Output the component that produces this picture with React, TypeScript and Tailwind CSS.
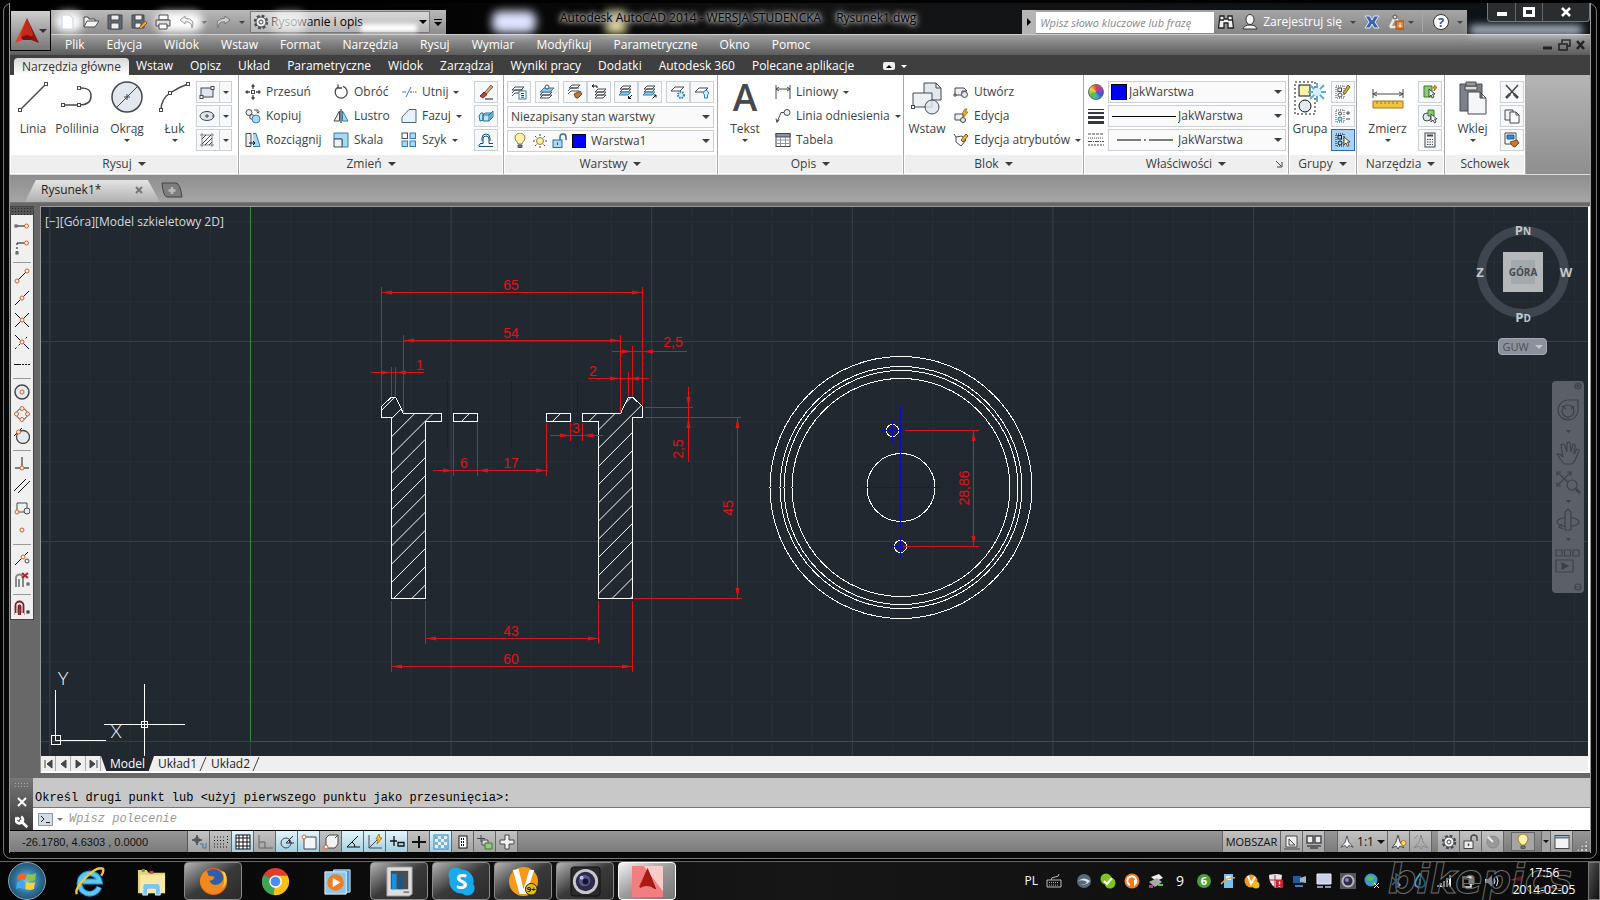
import type { ReactNode } from "react";

const INK = "#45484d";
const BLUE = "#2f7fb5";
const SKY = "#a9d8f2";

// 16x16 line icons, stroked with INK unless they say otherwise
const icons: Record<string, ReactNode> = {
  rect: <><rect x="2" y="4" width="12" height="9" fill="#dfe5ec" /><rect x="1" y="11.5" width="3" height="3" fill="#fff" /><rect x="12" y="2.5" width="3" height="3" fill="#fff" /></>,
  ellipse: <><ellipse cx="8" cy="8" rx="7" ry="4.5" fill="#dfe5ec" /><path d="M8 6v4M6 8h4M14 6.5v3M6.5 3.5h3" /></>,
  hatch: <><path d="M3 1v14M13 1v14M1 3h14M1 13h14" stroke="#888" /><path d="M3 7l4-4M3 12l9-9M6 13l7-7M10 13l3-3" /></>,
  move: <><path d="M8 1v4M8 11v4M1 8h4M11 8h4M6.5 2.5L8 1l1.5 1.5M6.5 13.5L8 15l1.5-1.5M2.5 6.5L1 8l1.5 1.5M13.5 6.5L15 8l-1.5 1.5" strokeWidth="1.4" /><rect x="6.5" y="6.5" width="3" height="3" fill="#fff" /></>,
  copy: <><circle cx="4" cy="4.5" r="3" fill="#eef1f4" /><circle cx="7" cy="9" r="2.3" fill="#eef1f4" /><circle cx="11" cy="11" r="4" fill={SKY} stroke={BLUE} /><path d="M9 2h4v3M11.5 3.5L13 5.3l1.5-1.8" /></>,
  stretch: <><path d="M1 1.5h5v13H1z" fill="#eef1f4" /><path d="M8 1.5h3l4 13H8" fill={SKY} stroke={BLUE} /><path d="M4 11h6M8 9l2 2-2 2" stroke="#111" /></>,
  rotate: <path d="M5 3a6 6 0 1 0 5-.6M5 .5V4h4" strokeWidth="1.3" />,
  mirror: <><path d="M6.5 3v10H1z" fill="#eef1f4" /><path d="M9.5 3v10H15z" fill={SKY} stroke={BLUE} /><path d="M8 1v14" stroke="#111" /></>,
  scale: <><path d="M1 1h14v14H9V7H1z" fill={SKY} stroke={BLUE} /><path d="M1 7h8v8H1z" fill="#eef1f4" /></>,
  trim: <><path d="M1 8h4M5 13l5-10" stroke={BLUE} /><path d="M9 8h2M12 8h1M14 8h1.5" /></>,
  chamfer: <path d="M1 14.5V9l7-7.5h7v13z" fill="#e7f3fb" stroke="#4b6478" />,
  array: <><rect x="1" y="1" width="5.5" height="5.5" fill="#fff" /><g fill={SKY} stroke={BLUE}><rect x="9" y="1" width="5.5" height="5.5" /><rect x="1" y="9" width="5.5" height="5.5" /><rect x="9" y="9" width="5.5" height="5.5" /></g></>,
  erase: <><path d="M6.5 8.5L13 1l2 2-6.5 7z" fill="#caa98b" stroke="#8b6543" /><path d="M2 12l4-4 3 2.5-4 3.5z" fill="#b44832" stroke="#7c2e1e" /><path d="M7 15h8" stroke="#111" /></>,
  explode: <g stroke="#19719f" fill="#bfe4f6"><path d="M1 8l2-3 2 0v7l-3 1zM5 7h6v6H5zM5 7l2-2h6l-2 2M11 7l2-2v6l-2 2M13 5l2-2v6l-2 2" /></g>,
  offset: <><path d="M1 14.5h14M2 11.5h3V7a3 3 0 0 1 6 0v4.5h4M4 9V6a4 4 0 0 1 8 0v3" stroke="#174f7a" /><path d="M1 14.5q-1-2 2-3" stroke="#19719f" /></>,
  layerProps: <><g fill="#fff"><path d="M1 12l3-3h8M1 9l3-3h8M1 6l3-3h9L10 6z" /></g><rect x="8" y="7" width="7" height="8" fill="#fff" stroke={BLUE} /><path d="M10 9.5h3M10 11.5h3M10 13.2h3" /></>,
  layerMake: <><path d="M1 14l3-3h9l-3 3zM1 11l3-3h9l-3 3z" fill="#fff" /><path d="M1 8l4-4h10l-4 4z" fill="#8cc9e8" stroke={BLUE} /><circle cx="8" cy="3" r="2" fill="#fff" /></>,
  layerMatch: <><path d="M1 10l3-3h8M1 7l3-3h8M2 4l3-3h8l-3 3z" fill="#fff" /><path d="M7 10l6-3 2 3-4 4q-3 1-4-4z" fill="#b9783a" stroke="#7a4817" /></>,
  layerPrev: <><path d="M4 14l3-3h8l-3 3zM4 11l3-3h8l-3 3zM4 8l3-3h8l-3 3z" fill="#fff" /><path d="M6 4V2H1M3 .5L1 2l2 1.5" stroke="#111" /></>,
  layerIso: <><path d="M2 5l3-3h8l-3 3zM2 8l3-3h8l-3 3z" fill="#fff" /><path d="M1 11l3-3h9l-3 3z" fill="#8cc9e8" stroke={BLUE} /><path d="M14 11l-3.5 3.5M10.5 12v2.5H13" stroke="#111" /></>,
  layerUniso: <><path d="M2 5l3-3h8l-3 3zM2 8l3-3h8l-3 3z" fill="#fff" /><path d="M1 11l3-3h9l-3 3z" fill="#8cc9e8" stroke={BLUE} /><path d="M10.5 14.5L14 11M11.5 11H14v2.5" stroke="#111" /></>,
  layerFreeze: <><path d="M1 7l4-4h9l-4 4z" fill="#fff" /><circle cx="11" cy="11" r="3" stroke={BLUE} fill="#d8eefa" strokeDasharray="1.5 1" strokeWidth="2" /></>,
  layerOff: <><path d="M1 8l4-4h9l-4 4z" fill="#fff" /><path d="M10.5 14v-3a2.5 2.5 0 1 1 3 0v3z" fill="#d8eefa" stroke={BLUE} /></>,
  bulb: <><path d="M6 11c0-2-3-3-3-6a5 5 0 0 1 10 0c0 3-3 4-3 6z" fill="#fff0a8" stroke="#9c7b2c" /><path d="M6 12h4v2.5H6z" fill="#777" stroke="#555" /></>,
  sun: <><circle cx="8" cy="8" r="3.5" fill="#fff0a8" stroke="#9c7b2c" /><path d="M8 1v2M8 13v2M1 8h2M13 8h2M3 3l1.5 1.5M11.5 11.5L13 13M3 13l1.5-1.5M11.5 4.5L13 3" /></>,
  unlock: <><rect x="1" y="7" width="9" height="7.5" fill="#a9d8f2" stroke="#2d6f93" /><path d="M8 7V4a3 3 0 0 1 6 0v3" stroke="#2d6f93" strokeWidth="1.5" /><path d="M5.5 9.5v2.5" /></>,
  linear: <path d="M1 1v14M15 1v14M1 5h14M4 3L1 5l3 2M12 3l3 2-3 2" />,
  leader: <><circle cx="12" cy="4.5" r="3" fill="#eef1f4" /><path d="M9 4.5H6L2 14M1 10.5l1 4 2.5-3" /></>,
  table: <><rect x="1" y="1.5" width="14" height="13" fill="#fff" /><path d="M1 1.5h14V5H1z" fill="#8b95a3" /><path d="M1 8h14M1 11.5h14M5.5 5v9.5M10.5 5v9.5" stroke="#8b95a3" /></>,
  blockNew: <><path d="M2 4h9l3 3H9v4H2z" fill="#eef1f4" /><circle cx="11.5" cy="10.5" r="3" fill="#dfe5ec" /><path d="M1 10h2v2H1z" fill="#fff" /></>,
  blockEdit: <><path d="M2 6h8v6H2z" fill="#eef1f4" /><circle cx="10" cy="12" r="2.5" fill="#dfe5ec" /><path d="M12 1l-3 5h2l-1 4 5-6h-3l2-3z" fill="#f5b93a" stroke="#b36f10" /></>,
  attrEdit: <><path d="M3 5l6-1 4 4-5 6-5-4z" fill="#fff" /><path d="M8 8l5-6 2 2-5 6z" fill="#f5b93a" stroke="#7a4817" /><path d="M1 2l2 3" /></>,
  lineWeight: <g stroke="none" fill="#35383d"><rect y="1" width="16" height="1" /><rect y="4" width="16" height="2" /><rect y="8" width="16" height="3" /><rect y="13" width="16" height="3" /></g>,
  lineType: <g><path d="M0 2h16" strokeDasharray="3 1" /><path d="M0 6h16" strokeDasharray="1 1" /><path d="M0 9.5h16" strokeDasharray="4 1 1 1" /><path d="M0 13h16" strokeDasharray="2 1" /></g>,
  groupEdit: <><path d="M1 2h8v12H1z" strokeDasharray="1 1" /><rect x="3" y="4" width="3.5" height="3.5" /><circle cx="5" cy="11" r="2" /><path d="M8 9l5-8 2 2-5 7z" fill="#c9b14a" stroke="#7a5d17" /></>,
  groupAdd: <><path d="M1 2h8v12H1z" strokeDasharray="1 1" /><circle cx="5" cy="5.5" r="1.5" /><circle cx="5" cy="11" r="2" fill={SKY} stroke={BLUE} /><path d="M11 5h4M13 3v4M11 11h4" /></>,
  groupSel: <><path d="M1 2h8v12H1z" strokeDasharray="1 1" stroke="#111" /><rect x="3" y="3.5" width="3.5" height="3.5" stroke="#111" /><circle cx="5" cy="11" r="2" stroke="#111" /><path d="M9 5v8l2-2 1.5 3.5 1.5-1L12.5 10H15z" fill="#fffbd0" /></>,
  quickSel: <><path d="M2 2h8v11H2z" fill="#8ecb78" stroke="#3b7a2a" /><path d="M7 5v8l2-2 1.5 3 1.5-1-1.5-3H13z" fill="#fff" /><path d="M13 1l-2 3h2l-1 3 3-4h-2z" fill="#f5b93a" stroke="#b36f10" /></>,
  selSimilar: <><circle cx="5" cy="9" r="4" fill="#dfe5ec" /><path d="M6 2h6v6H6z" fill="#8ecb78" stroke="#3b7a2a" /><path d="M9 6v8l2-2 1.5 3 1.5-1-1.5-3H15z" fill="#fff" /></>,
  calc: <><rect x="3" y="1" width="10" height="14" fill="#f4f4f4" /><path d="M5 3.5h6" strokeWidth="2" /><path d="M5 7.5h6M5 10h6M5 12.5h6" strokeDasharray="1.5 1" /></>,
  cut: <><path d="M2 1l9 10M14 1L5 11" strokeWidth="1.5" /><path d="M2 14l4-4M14 14l-4-4" strokeWidth="2.5" /></>,
  pages: <><path d="M1 2h8v10H1z" fill="#eef1f4" /><path d="M6 4h6l3 3v8H6zM12 4v3h3" fill="#fff" /></>,
  matchProp: <><path d="M1 1h11v11H1z" fill="#fff" /><path d="M3 3h7v4H3z" fill="#3f86c8" stroke="#1d5b94" /><path d="M6 10l7-2 2 3-4 4q-3 0-5-5z" fill="#c67a3a" stroke="#7a4817" /></>,
  // object snap palette
  sTrack: <><path d="M3 8h8" stroke="#111" /><rect x="1" y="7" width="2" height="2" /><circle cx="12.5" cy="8" r="2" stroke="#d4622a" /></>,
  sFrom: <><path d="M3 3h7" stroke="#111" /><path d="M3 3v9" strokeDasharray="2 2" stroke="#111" /><rect x="2" y="12" width="2" height="2" /><circle cx="12.5" cy="3" r="2" stroke="#d4622a" /></>,
  sEnd: <><path d="M4 12l8-8" stroke="#111" /><circle cx="3" cy="13" r="2" stroke="#d4622a" /><circle cx="13" cy="3" r="2" stroke="#d4622a" /></>,
  sMid: <><path d="M1 15L15 1" stroke="#111" /><circle cx="8" cy="8" r="2" fill="#f0f0f0" stroke="#d4622a" /></>,
  sInt: <><path d="M1 15L15 1M1 1l14 14" stroke="#111" /><circle cx="8" cy="8" r="2" fill="#f0f0f0" stroke="#d4622a" /></>,
  sApp: <><path d="M1 1l14 14" stroke="#111" /><path d="M1 15L15 1" stroke="#111" strokeDasharray="2 3" /><circle cx="8" cy="8" r="2" fill="#f0f0f0" stroke="#d4622a" /></>,
  sExt: <><path d="M0 8.5h7" stroke="#111" /><path d="M8 8.5h8" strokeDasharray="2 1" stroke="#111" /></>,
  sCen: <><circle cx="8" cy="8" r="7" fill="#e4eaee" strokeWidth="1.5" /><circle cx="8" cy="8" r="2" stroke="#d4622a" /></>,
  sQuad: <><circle cx="8" cy="8" r="5.5" /><g fill="#f0f0f0" stroke="#d4622a"><circle cx="8" cy="2.5" r="2" /><circle cx="8" cy="13.5" r="2" /><circle cx="2.5" cy="8" r="2" /><circle cx="13.5" cy="8" r="2" /></g></>,
  sTan: <><circle cx="9" cy="9" r="6.5" fill="#e4eaee" strokeWidth="1.3" /><path d="M0 8l8-8" stroke="#111" /><circle cx="4.5" cy="4" r="2" fill="#f0f0f0" stroke="#d4622a" /></>,
  sPerp: <><path d="M8 1v9M1 12h14" stroke="#111" /><circle cx="8" cy="12" r="2" fill="#f0f0f0" stroke="#d4622a" /></>,
  sPar: <path d="M0 13L12 1M4 15L16 3" stroke="#111" />,
  sIns: <><path d="M3 10V3h10v5M5 12h5" /><circle cx="3" cy="12" r="2" stroke="#d4622a" /><circle cx="13" cy="11" r="3" fill="#e4eaee" /></>,
  sNode: <circle cx="8" cy="8" r="2" stroke="#d4622a" />,
  sNear: <><path d="M1 15L14 2" stroke="#111" /><circle cx="9" cy="7" r="2" fill="#f0f0f0" stroke="#d4622a" /><circle cx="13" cy="11" r="2" /></>,
  sNone: <><path d="M2 15V6a3.5 3.5 0 0 1 7 0v9M5 15V7" stroke="#8a8a8a" strokeWidth="2" /><path d="M8 1l6 5M14 1L8 6" stroke="#b3202a" strokeWidth="2" /><rect x="13" y="11" width="2" height="2" /></>,
  sOpts: <><path d="M1.500 15V5.500a4 4 0 0 1 8 0V15M4.500 15V6.500a1 1 0 0 1 2 0V15" stroke="#7c2026" strokeWidth="1.800" /><path d="M1 14h3M7 14h3" stroke="#eee" strokeWidth="2" /><rect x="13" y="11" width="2" height="2" stroke="#111" /></>,
  // status bar
  tInfer: <><path d="M6 1v10M1 6h10" strokeWidth="1.5" /><circle cx="6" cy="6" r="2.5" /><path d="M9 10h3v4h3V9" stroke={BLUE} /></>,
  tSnap: <path d="M1 3h11M1 6.5h11M1 10h11M1 13h14M14.500 2v8" strokeDasharray="1 2" stroke="#111" />,
  tGrid: <><rect x="1" y="1" width="14" height="14" fill="#fff" stroke="#111" /><path d="M4 1v14M8 1v14M12 1v14M1 4h14M1 8h14M1 12h14" stroke="#111" /></>,
  tOrtho: <path d="M2 1v13h14M2 8h6v6" stroke="#666" />,
  tPolar: <><circle cx="7" cy="9" r="5" /><path d="M7 9l7-7M7 9h8M10.500 5.500v3.500" stroke="#234" /></>,
  tOsnap: <><path d="M3 3h12v12H3z" fill="#f0f6fa" /><circle cx="3" cy="3" r="2" fill="#fff" stroke="#d4622a" /></>,
  t3d: <><path d="M3 4l3-3h9v9l-3 4H3z" fill="#f3f3f3" /><path d="M12 4l3-3" /><circle cx="3" cy="13" r="2" fill="#fff" stroke="#d4622a" /></>,
  tAngle: <path d="M13 2L2 13h13M7 8q3 2 3 5" stroke="#111" />,
  tDucs: <><path d="M2 1v13h13M2 14L10 6" /><path d="M12 0L9 5h2l-1 5 5-6h-2z" fill="#f5c93a" stroke="#b37f10" /></>,
  tDyn: <path d="M5 2v10M1 7h7M9 8.5h6v3.5H9z" stroke="#111" strokeWidth="1.3" />,
  tLwt: <path d="M8 2v12M1 8h14" stroke="#111" strokeWidth="2" />,
  tTpy: <><rect x="1" y="1" width="14" height="14" fill="#e3f1fa" stroke={BLUE} /><path d="M2 3.500h12M2 9.500h12" stroke="#78b4d8" strokeDasharray="3 3" strokeWidth="3" /><path d="M5 6.500h9M5 12.500h9" stroke="#78b4d8" strokeDasharray="3 3" strokeWidth="3" /></>,
  tQp: <><rect x="4" y="2" width="8" height="12" fill="#fff" stroke="#111" /><path d="M6 5h4M6 8h4M6 11h4" stroke="#111" strokeDasharray="1 1" strokeWidth="2" /></>,
  tSc: <><path d="M4 1v7M0 4.5h8" /><path d="M5 6h6v5H5z" fill="#ddd" /><path d="M8 9h7v6H8z" fill="#8ecb78" stroke="#3b7a2a" /></>,
  tPlus: <path d="M6 1h4v5h5v4h-5v5H6v-5H1V6h5z" fill="#f3f3f3" />,
  model: <><path d="M2 2h11v11H2zM0 15h16" fill="#eee" /><path d="M5 5v6h6z" /></>,
  viewports: <path d="M1 2h6v7H1zM9 2h6v7H9zM1 12h14M4 14h8" fill="#eee" strokeWidth="1.5" />,
  anno: <path d="M8 1l2 7 5 6-5-2-2 3-2-3-5 2 5-6z" fill="#f3f3f3" />,
  annoSun: <><path d="M7 1l2 7 4 6-4-2-2 3-2-3-4 2 4-6z" fill="#f3f3f3" /><circle cx="12.5" cy="9" r="2.5" fill="#ffd867" stroke="#b37f10" /></>,
  annoOff: <path d="M8 1l2 7 5 6-5-2-2 3-2-3-5 2 5-6zM1 5l4-4" stroke="#888" />,
  gear: <><circle cx="8" cy="8" r="6" strokeWidth="2.5" strokeDasharray="2.7 2" /><circle cx="8" cy="8" r="5" fill="#f3f3f3" /><circle cx="8" cy="8" r="2" /></>,
  lockOpen: <><rect x="1" y="7" width="9" height="7.5" fill="#eee" /><path d="M8 7V4a3 3 0 0 1 6 0v3M5.5 9.5v2.5" strokeWidth="1.5" /></>,
  hardware: <><circle cx="8" cy="8" r="6" fill="#999" stroke="#888" /><path d="M3 3l5 5" stroke="#eee" strokeWidth="2" /></>,
  clean: <><rect x="1" y="1.5" width="14" height="13" fill="#f3f3f3" /><path d="M1 3.5h14" stroke="#5d7894" strokeWidth="2" /></>,
  // quick access
  fileNew: <path d="M3 1h7l4 3v11H3z" fill="#fff" stroke="#c3d2ea" />,
  open: <><path d="M1 13V3h4l1 2h6v2" fill="#eee" /><path d="M1 13l3-6h12l-4 6z" fill="#f4f4f4" /></>,
  save: <><path d="M1 1h14v14H1z" fill="#606872" /><path d="M4 1h8v5H4z" fill="#eee" /><path d="M4 9h8v6H4z" fill="#eee" /></>,
  saveAs: <><path d="M1 1h12v13H1z" fill="#606872" /><path d="M4 1h7v5H4zM4 9h6v5H4z" fill="#eee" /><path d="M8 14l6-7 2 2-6 6z" fill="#f0a83a" stroke="#8a5a10" /></>,
  print: <><path d="M4 1h9v5H4z" fill="#fff" /><path d="M1 6h14v6H1z" fill="#ddd" /><path d="M4 10h8v5H4z" fill="#fff" /></>,
  undo: <path d="M6 2L1 6l5 4V8q7-1 7 6 4-9-7-10z" fill="#f3f3f3" stroke="#999" />,
  redo: <path d="M10 2l5 4-5 4V8Q3 7 3 14-1 5 10 4z" fill="#ccc" stroke="#777" />,
  binoc: <path d="M2 2h4v3h4V2h4l1.5 12H10V9H6v5H.5zM2 6h4M10 6h4" fill="#eee" stroke="#222" strokeWidth="1.3" />,
  user: <><ellipse cx="8" cy="5.5" rx="4" ry="5" fill="#f3f3f3" stroke="#333" /><path d="M1 15q1-4 7-4t7 4z" fill="#f3f3f3" stroke="#333" /></>,
  exchange: <path d="M1 2h5l2 4 2-4h5l-4 6 4 6h-5l-2-4-2 4H1l4-6z" fill="#3d66a8" stroke="#dfe8f5" />,
  connect: <><path d="M2 13L7 3l5 8M2 13h6" strokeWidth="2.5" stroke="#e8e8e8" /><circle cx="7" cy="3" r="2" fill="#ddd" /><rect x="8" y="7" width="8" height="8" fill="#e8822c" stroke="#9a4a10" /><path d="M12 9v4M10.5 11.5L12 13l1.5-1.5" stroke="#fff" /></>,
};

function Icon({ name, className = "size-4" }: { name: string; className?: string }) {
  return (
    <svg viewBox="0 0 16 16" fill="none" stroke={INK} strokeWidth="1" aria-hidden className={`shrink-0 ${className}`}>
      {icons[name]}
    </svg>
  );
}

function Caret({ big = false, className = "" }: { big?: boolean; className?: string }) {
  return (
    <svg viewBox="0 0 8 4" aria-hidden className={`shrink-0 fill-current ${big ? "h-1 w-2" : "h-[3px] w-[6px]"} ${className}`}>
      <path d="M0 0h8L4 4z" />
    </svg>
  );
}

function Panel({ title, width, menu = true, corner = false, children }: { title: string; width: string; menu?: boolean; corner?: boolean; children: ReactNode }) {
  return (
    <section className={`flex shrink-0 flex-col border-r border-[#a9a9a9] bg-white ${width}`}>
      <div className="flex h-20 pt-[5px]">{children}</div>
      <div className="relative mx-px flex h-[18px] items-center justify-center gap-1.5 bg-[#efefef] text-[#3c3c3c]">
        {title}
        {menu && <Caret big />}
        {corner && (
          <svg viewBox="0 0 8 8" fill="none" stroke="#444" aria-hidden className="absolute right-1 size-2">
            <path d="M1 1l5 5M7 2v5H2" />
          </svg>
        )}
      </div>
    </section>
  );
}

function Big({ label, width, menu = false, children }: { label: string; width: string; menu?: boolean; children: ReactNode }) {
  return (
    <button className={`flex shrink-0 flex-col items-center ${width}`}>
      <svg viewBox="0 0 32 36" fill="none" stroke={INK} aria-hidden className="h-9 w-8 shrink-0 overflow-visible">{children}</svg>
      <span className="mt-1 h-[17px] leading-[17px]">{label}</span>
      {menu && <Caret className="mt-0.5" />}
    </button>
  );
}

function Cmd({ icon, label, menu = false }: { icon: string; label: string; menu?: boolean }) {
  return (
    <button className="flex h-6 items-center gap-[5px] whitespace-nowrap">
      <Icon name={icon} />
      {label}
      {menu && <Caret />}
    </button>
  );
}

function Small({ icon, on = false, split = false }: { icon: string; on?: boolean; split?: boolean }) {
  return (
    <button
      aria-label={icon}
      className={`my-px flex h-[22px] items-center justify-around border ${split ? "w-9" : "w-6"} ${on ? "border-[#2c6fad] bg-[#a8d3f7]" : "border-[#cbd0d6] bg-[#f7f8f9]"}`}
    >
      <Icon name={icon} />
      {split && <span className="flex h-full items-center border-l border-[#cbd0d6] pl-[3px]"><Caret /></span>}
    </button>
  );
}

function Pick({ label, value, children }: { label: string; value: string; children?: ReactNode }) {
  return (
    <div className="my-0.5 flex h-[22px] items-center border border-[#cbd0d6] bg-[#fafafa] pr-[3px] first:mt-px">
      {children}
      <select aria-label={label} className="h-full min-w-0 flex-1 appearance-none bg-transparent outline-none">
        <option>{value}</option>
      </select>
      <Caret big />
    </div>
  );
}

const node = (x: number, y: number) => <rect x={x - 1.5} y={y - 1.5} width="3" height="3" fill="#fff" />;

function Ribbon() {
  return (
    <div className="flex h-[99px] bg-linear-to-b from-[#b5b5b5] to-[#8e8e8e] text-[#3c3f44]">
      <Panel title="Rysuj" width="w-[229px]">
        <Big label="Linia" width="w-[46px]"><path d="M3 30L29 4" strokeWidth="1.5" />{node(3, 30)}{node(29, 4)}</Big>
        <Big label="Polilinia" width="w-[42px]"><path d="M2 25h16q12 0 12-9T18 8" strokeWidth="1.5" />{node(2, 25)}{node(18, 25)}{node(18, 8)}</Big>
        <Big label="Okrąg" width="w-[58px]" menu><circle cx="16" cy="17" r="15" fill="#e3e8ee" strokeWidth="1.5" /><path d="M5 28L27 6M13 17h6M16 14v6" /></Big>
        <Big label="Łuk" width="w-[37px]" menu><path d="M2 30Q2 19 11 13T29 4" strokeWidth="1.5" />{node(2, 30)}{node(11, 13)}{node(29, 4)}</Big>
        <div className="ml-[3px] flex flex-col"><Small icon="rect" split /><Small icon="ellipse" split /><Small icon="hatch" split /></div>
      </Panel>
      <Panel title="Zmień" width="w-[265px]">
        <div className="w-[88px] pl-1.5"><Cmd icon="move" label="Przesuń" /><Cmd icon="copy" label="Kopiuj" /><Cmd icon="stretch" label="Rozciągnij" /></div>
        <div className="w-[68px] pl-1.5"><Cmd icon="rotate" label="Obróć" /><Cmd icon="mirror" label="Lustro" /><Cmd icon="scale" label="Skala" /></div>
        <div className="w-[79px] pl-1.5"><Cmd icon="trim" label="Utnij" menu /><Cmd icon="chamfer" label="Fazuj" menu /><Cmd icon="array" label="Szyk" menu /></div>
        <div className="flex flex-col"><Small icon="erase" /><Small icon="explode" /><Small icon="offset" /></div>
      </Panel>
      <Panel title="Warstwy" width="w-[214px]">
        <div className="flex-1 pr-[3px] pl-[3px]">
          <div className="flex justify-between">
            <Small icon="layerProps" /><Small icon="layerMake" />
            <div className="flex"><Small icon="layerMatch" /><Small icon="layerPrev" /></div>
            <div className="flex"><Small icon="layerIso" /><Small icon="layerUniso" /></div>
            <div className="flex"><Small icon="layerFreeze" /><Small icon="layerOff" /></div>
          </div>
          <Pick label="Stan warstwy" value="Niezapisany stan warstwy"><span className="w-[3px]" /></Pick>
          <Pick label="Warstwa" value="Warstwa1">
            <span className="mr-[5px] ml-1 flex items-center gap-1"><Icon name="bulb" /><Icon name="sun" /><Icon name="unlock" /><span className="size-3.5 border border-black bg-[#0000f5]" /></span>
          </Pick>
        </div>
      </Panel>
      <Panel title="Opis" width="w-[186px]">
        <Big label="Tekst" width="w-[54px]" menu><text x="16" y="31" textAnchor="middle" fontSize="37" stroke="none" fill={INK} fontWeight="600" fontFamily="Open Sans, sans-serif">A</text></Big>
        <div className="pl-[3px]"><Cmd icon="linear" label="Liniowy" menu /><Cmd icon="leader" label="Linia odniesienia" menu /><Cmd icon="table" label="Tabela" /></div>
      </Panel>
      <Panel title="Blok" width="w-[180px]">
        <Big label="Wstaw" width="w-[46px]">
          <path d="M13 3h12l5 5v12H13z" fill="#e3e8ee" /><path d="M25 3v5h5" /><path d="M2 13h19v14H2z" fill="#eef1f4" /><circle cx="21" cy="27" r="7" fill="#dfe5ec" fillOpacity=".8" />{node(2, 27)}
        </Big>
        <div className="pl-[3px]"><Cmd icon="blockNew" label="Utwórz" /><Cmd icon="blockEdit" label="Edycja" /><Cmd icon="attrEdit" label="Edycja atrybutów" menu /></div>
      </Panel>
      <Panel title="Właściwości" width="w-[205px]" corner>
        <div className="flex w-6 flex-col items-center">
          <span className="my-1 size-4 rounded-full border border-[#666] bg-[conic-gradient(#e8403a,#b03ac0,#3a5ad8,#3ac0b0,#5ac03a,#f0d83a,#e8403a)]" />
          <Icon name="lineWeight" className="my-1 size-4" /><Icon name="lineType" className="my-1 size-4" />
        </div>
        <div className="flex-1 pr-0.5">
          <Pick label="Kolor" value="JakWarstwa"><span className="mr-0.5 ml-0.5 size-4 border border-black bg-[#0000f5]" /></Pick>
          <Pick label="Szerokość linii" value="JakWarstwa"><span className="mr-0.5 ml-[3px] h-px w-16 bg-black" /></Pick>
          <Pick label="Rodzaj linii" value="JakWarstwa">
            <svg viewBox="0 0 59 2" aria-hidden className="mr-0.5 ml-2 h-0.5 w-[59px]"><path d="M0 1h59" stroke="#000" strokeDasharray="24 3 2 3" /></svg>
          </Pick>
        </div>
      </Panel>
      <Panel title="Grupy" width="w-[68px]">
        <Big label="Grupa" width="w-[42px]">
          <path d="M1 2h20v32H1z" strokeDasharray="2 2" stroke="#111" /><rect x="5" y="5" width="11" height="11" fill="#f7f3a8" stroke="#111" /><circle cx="11" cy="26" r="6" fill="#e3e8ee" stroke="#111" />
          <path d="M23 3v19M14 12h18M16 5l14 14M30 5L16 19" stroke="#5aaee0" strokeWidth="2" /><circle cx="23" cy="12" r="4" fill="#d8f0fc" stroke="none" />
        </Big>
        <div className="flex flex-col"><Small icon="groupEdit" /><Small icon="groupAdd" /><Small icon="groupSel" on /></div>
      </Panel>
      <Panel title="Narzędzia" width="w-[88px]">
        <Big label="Zmierz" width="w-[61px]" menu><path d="M1 9v9M31 9v9M1 14h30M5 12l-4 2 4 2M27 12l4 2-4 2" /><path d="M1 21h30v7H1z" fill="#f2c33c" stroke="#a5761a" /><path d="M5 21v3M9 21v3M13 21v3M17 21v3M21 21v3M25 21v3" stroke="#a5761a" /></Big>
        <div className="flex flex-col"><Small icon="quickSel" /><Small icon="selSimilar" /><Small icon="calc" /></div>
      </Panel>
      <Panel title="Schowek" width="w-[81px]" menu={false}>
        <Big label="Wklej" width="w-[55px]" menu><path d="M3 4h22v27H3z" fill="#7d828a" /><path d="M8 6h12v4H8z" fill="#ddd" /><path d="M9 2h10v4H9z" fill="#999" /><path d="M11 12h12l6 6v16H11zM23 12v6h6" fill="#f4f6f8" /></Big>
        <div className="flex flex-col"><Small icon="cut" /><Small icon="pages" /><Small icon="matchProp" /></div>
      </Panel>
    </div>
  );
}

const menus = ["Plik", "Edycja", "Widok", "Wstaw", "Format", "Narzędzia", "Rysuj", "Wymiar", "Modyfikuj", "Parametryczne", "Okno", "Pomoc"];
const tabs = ["Wstaw", "Opisz", "Układ", "Parametryczne", "Widok", "Zarządzaj", "Wyniki pracy", "Dodatki", "Autodesk 360", "Polecane aplikacje"];

function TitleBar() {
  return (
    <header className="relative flex h-[31px] items-end bg-linear-to-r from-black via-[#141414] to-[#0c1218]">
      <div className="absolute top-2 left-[482px] h-[22px] w-11 rounded-lg bg-[#dfe4ff] blur-[5px]" />
      <div className="absolute top-2 left-[596px] h-[22px] w-5 bg-[#e9e2a8] blur-[4px]" />
      <div className="absolute right-2 bottom-0 h-2 w-28 bg-[#cfdceb] blur-[4px]" />
      <div className="ml-[41px] flex h-6 items-center bg-linear-to-b from-[#b9b9b9] to-[#8d8d8d] pl-2 text-[#444]">
        <div className="relative flex items-center gap-2">
          <span className="absolute -left-1 h-5 w-7 rounded-full bg-white blur-[4px]" />
          <span className="absolute left-24 h-5 w-12 rounded-full bg-white blur-[4px]" />
          {["fileNew", "open", "save", "saveAs", "print", "undo"].map((n) => (
            <button key={n} aria-label={n} className="relative"><Icon name={n} /></button>
          ))}
          <Caret className="-ml-0.5" />
          <button aria-label="redo"><Icon name="redo" /></button>
          <Caret />
        </div>
        <div className="relative ml-[5px] flex h-[22px] w-[180px] items-center border border-[#777] bg-linear-to-b from-[#d8d8d8] to-[#b5b5b5] px-0.5 text-black">
          <Icon name="gear" />
          <select aria-label="Obszar roboczy" className="h-full min-w-0 flex-1 appearance-none bg-transparent pl-0.5">
            <option>Rysowanie i opis</option>
          </select>
          <Caret big />
          <span className="pointer-events-none absolute top-0 left-5 h-5 w-9 rounded-full bg-white/70 blur-[4px]" />
          <span className="pointer-events-none absolute right-3 bottom-0 h-2 w-14 bg-white blur-[2px]" />
        </div>
        <button aria-label="Dostosuj" className="flex h-full w-4 flex-col items-center justify-center gap-0.5 text-black">
          <span className="h-px w-2 bg-black" /><Caret big />
        </button>
      </div>
      <h1 className="relative ml-[114px] flex h-6 items-center gap-[15px] pb-2 text-black [text-shadow:0_0_3px_#a5a5a5,0_0_4px_#a5a5a5,0_0_6px_#999,0_0_8px_#888,0_0_10px_#777]">
        <span>Autodesk AutoCAD 2014 - WERSJA STUDENCKA</span><span>Rysunek1.dwg</span>
      </h1>
      <div className="mr-[123px] ml-auto flex h-6 items-center bg-linear-to-b from-[#a5a5a5] to-[#858585] text-white">
        <button aria-label="Rozwiń" className="flex h-full w-3.5 items-center justify-center bg-[#b5b5b5] text-black"><Caret big className="-rotate-90" /></button>
        <input aria-label="Szukaj" placeholder="Wpisz słowo kluczowe lub frazę" className="h-[21px] w-[178px] bg-white px-1 text-[11px] text-black italic outline-none placeholder:text-[#888]" />
        <button aria-label="Szukaj teraz" className="ml-1"><Icon name="binoc" /></button>
        <button className="ml-2 flex items-center gap-[5px]"><Icon name="user" />Zarejestruj się</button>
        <Caret className="mr-2 ml-2 text-[#444]" />
        <button aria-label="Exchange"><Icon name="exchange" /></button>
        <button aria-label="Połącz" className="ml-2 flex items-center gap-1 text-[#444]"><Icon name="connect" /><Caret /></button>
        <span className="ml-2 h-5 w-px bg-[#aaa]" />
        <button aria-label="Pomoc" className="ml-2.5 flex items-center gap-2 text-[#444]">
          <span className="flex size-4 items-center justify-center rounded-full border border-[#333] bg-white text-[13px] leading-none font-bold text-[#2b5fa8]">?</span><Caret />
        </button>
        <span className="w-1" />
      </div>
      <div className="absolute top-0 right-0 flex h-[19px] w-[103px] items-center rounded-b border border-t-0 border-[#777] bg-[#2a2d30]">
        <button aria-label="Minimalizuj" className="flex h-full w-[28px] items-center justify-center border-r border-[#666]"><span className="mt-1 h-1 w-2.5 bg-white" /></button>
        <button aria-label="Przywróć" className="flex h-full w-[27px] items-center justify-center border-r border-[#666]"><span className="h-2.5 w-3 border-[3px] border-white" /></button>
        <button aria-label="Zamknij" className="flex h-full flex-1 items-center justify-center">
          <svg viewBox="0 0 10 10" stroke="#fff" strokeWidth="2.5" aria-hidden className="size-2.5"><path d="M1 1l8 8M9 1L1 9" /></svg>
        </button>
      </div>
    </header>
  );
}

function AppButton() {
  return (
    <button aria-label="AutoCAD" className="absolute top-[7px] left-0 z-10 flex h-[41px] w-[41px] items-center border border-black bg-linear-to-b from-[#cfcfcf] to-[#777] pl-1 text-[#333]">
      <svg viewBox="0 0 24 26" aria-hidden className="h-[26px] w-6 shrink-0">
        <path d="M12 0L0 25l8-3z" fill="#e0412c" /><path d="M12 0l12 25-8-3z" fill="#8f1711" /><path d="M12 0L6 16l2 6 4-3 4 3 2-6z" fill="#c42a1c" /><path d="M6 19l6-2 6 2-2 3H8z" fill="#7a0f0b" />
      </svg>
      <Caret big />
    </button>
  );
}

const RED = "#e01217";

// Dimension arrowhead with its tip on (x, y)
function Arrow({ x, y, dir }: { x: number; y: number; dir: "l" | "r" | "u" | "d" }) {
  const turn = { l: 0, u: 90, r: 180, d: 270 }[dir];
  return <path d="M0 0l10-2v4z" fill={RED} stroke="none" transform={`translate(${x} ${y}) rotate(${turn})`} />;
}

function DimText({ x, y, up = false, children }: { x: number; y: number; up?: boolean; children: ReactNode }) {
  return (
    <text transform={`translate(${x} ${y})${up ? " rotate(-90)" : ""}`} textAnchor="middle" fill={RED} stroke="none" fontSize="14" fontFamily="Liberation Sans, Arial, sans-serif">
      {children}
    </text>
  );
}

const leftWall = "M381.5 417.5V406.5L391.5 397H395.5L403.5 413.5H441.5V421.5H425.5V598.5H391.5V417.5z";
const rightWall = "M642.5 417.5V406.5L632.5 397H628.5L620.5 413.5H582.5V421.5H598.5V598.5H632.5V417.5z";
const webs = "M453.5 413.5h24v8h-24zM546.5 413.5h24v8h-24z";

function Drawing() {
  const hatch = Array.from({ length: 34 }, (_, k) => 755.5 + k * 18.2);
  return (
    <svg aria-hidden className="absolute inset-0 size-full" fill="none">
      <defs>
        <clipPath id="solid"><path d={leftWall + rightWall + webs} /></clipPath>
        <pattern id="minor" x="250" y="741" width="40.12" height="40" patternUnits="userSpaceOnUse"><path d="M.5 0v40M0 .5h40.12" stroke="#262e36" /></pattern>
        <pattern id="major" x="250" y="741" width="200.6" height="200" patternUnits="userSpaceOnUse"><path d="M.5 0v200M0 .5h200.6" stroke="#363e47" /></pattern>
      </defs>
      <g transform="translate(-41 -207)">
        <rect x="40" y="207" width="4000" height="3000" fill="url(#minor)" />
        <rect x="40" y="207" width="4000" height="3000" fill="url(#major)" />
        <g shapeRendering="crispEdges">
          <path d="M250.5 207V741" stroke="#2f8a3a" />
          <path d="M250 741.5H4000" stroke="#80303a" />
        </g>

        {/* section view */}
        <g stroke="#fff" clipPath="url(#solid)">{hatch.map((c) => <path key={c} d={`M380 ${c - 380}L650 ${c - 650}`} />)}</g>
        <g stroke="#fff" shapeRendering="crispEdges"><path d={leftWall} /><path d={rightWall} /><path d={webs} /></g>

        {/* top view */}
        <g stroke="#fff" shapeRendering="crispEdges">
          {[131, 121, 117, 109, 34].map((r) => <circle key={r} cx="901" cy="487.5" r={r} />)}
          <circle cx="892.5" cy="430.5" r="6" /><circle cx="900.5" cy="546.5" r="6" />
        </g>
        <path d="M447.5 381v67M511.5 381v67M577.5 381v67M900.5 406v121M862 487.5h79M892.5 419v25M882 430.5h21M900.5 535v23M891 546.5h20" stroke="#0a0ac8" shapeRendering="crispEdges" />

        <g stroke={RED} shapeRendering="crispEdges">
          <path d="M381.5 292.5H642.5M381.5 287V405M642.5 287V405" />
          <path d="M403.5 340.5H620.5M403.5 335V413M620.5 335V413" />
          <path d="M371 372.5H424M391.5 367V396M395.5 367V396" />
          <path d="M612 351.5H687M632.5 346V396M588 378.5H649M628.5 372V396" />
          <path d="M688.5 387V462M645 407.5H693M645 417.5H741M737.5 417V598M634 598.5H742" />
          <path d="M550 435.5H603M570.5 423V441M582.5 423V441" />
          <path d="M433 470.5H546M453.5 423V476M477.5 423V476M546.5 423V476" />
          <path d="M425.5 638.5H598.5M425.5 601V644M598.5 601V644M391.5 666.5H632.5M391.5 601V672M632.5 601V672" />
          <path d="M905 430.5H979M903 546.5H979M973.5 430V546" />
        </g>
        <Arrow x={382} y={292.5} dir="l" /><Arrow x={642} y={292.5} dir="r" />
        <Arrow x={404} y={340.5} dir="l" /><Arrow x={620} y={340.5} dir="r" />
        <Arrow x={391} y={372.5} dir="r" /><Arrow x={396} y={372.5} dir="l" />
        <Arrow x={632} y={351.5} dir="r" /><Arrow x={643} y={351.5} dir="l" />
        <Arrow x={620} y={378.5} dir="r" /><Arrow x={629} y={378.5} dir="l" />
        <Arrow x={688.5} y={407} dir="d" /><Arrow x={688.5} y={418} dir="u" />
        <Arrow x={737.5} y={418} dir="u" /><Arrow x={737.5} y={598} dir="d" />
        <Arrow x={570} y={435.5} dir="r" /><Arrow x={583} y={435.5} dir="l" />
        <Arrow x={453} y={470.5} dir="r" /><Arrow x={478} y={470.5} dir="l" /><Arrow x={546} y={470.5} dir="r" />
        <Arrow x={426} y={638.5} dir="l" /><Arrow x={598} y={638.5} dir="r" />
        <Arrow x={392} y={666.5} dir="l" /><Arrow x={632} y={666.5} dir="r" />
        <Arrow x={973.5} y={431} dir="u" /><Arrow x={973.5} y={546} dir="d" />
        <DimText x={511} y={290}>65</DimText>
        <DimText x={511} y={338}>54</DimText>
        <DimText x={420} y={370}>1</DimText>
        <DimText x={673} y={347}>2,5</DimText>
        <DimText x={593} y={376}>2</DimText>
        <DimText x={576} y={433}>3</DimText>
        <DimText x={464} y={468}>6</DimText>
        <DimText x={511} y={468}>17</DimText>
        <DimText x={511} y={636}>43</DimText>
        <DimText x={511} y={664}>60</DimText>
        <DimText x={683} y={449} up>2,5</DimText>
        <DimText x={733} y={508} up>45</DimText>
        <DimText x={969} y={488} up>28,86</DimText>

        {/* UCS mark and crosshair */}
        <g stroke="#fff" shapeRendering="crispEdges">
          <path d="M55.5 690V740.5H106M51.5 735.5h9v9h-9z" />
          <path d="M104 724.5H185M144.5 684V756M141.5 721.5h6v6h-6z" />
        </g>
        <g fill="#fff" fontSize="18" textAnchor="middle" fontFamily="Lato, sans-serif" fontWeight="300"><text x="63" y="685">Y</text><text x="116" y="738">X</text></g>
      </g>
    </svg>
  );
}

function NavTools() {
  return (
    <>
      <div className="absolute top-[17px] right-[17px]">
        <svg viewBox="0 0 96 96" fill="none" aria-hidden className="size-24 overflow-visible" fontFamily="Open Sans, sans-serif" fontWeight="700" textAnchor="middle">
          <circle cx="48" cy="48" r="41.5" stroke="#40464f" strokeWidth="9" />
          <rect x="28" y="28" width="40" height="40" fill="#b5b7b8" /><rect x="36" y="36" width="24" height="24" fill="#a4a9ad" />
          <text x="48" y="52" fontSize="10" fill="#454c54">GÓRA</text>
          <g fontSize="13" fill="#c4c7ca"><text x="48" y="11">P<tspan fontSize="10">N</tspan></text><text x="48" y="98">P<tspan fontSize="10">D</tspan></text><text x="5" y="53">Z</text><text x="91" y="53">W</text></g>
        </svg>
      </div>
      <button className="absolute top-[131px] right-[41px] flex h-[17px] w-[49px] items-center justify-center gap-1.5 rounded border border-[#a5a9b5] bg-[#8d919e] text-[11px] text-[#4a4e58]">
        GUW<Caret big className="text-[#c5c8d0]" />
      </button>
      <div className="absolute top-[174px] right-1 rounded bg-[#5a6066] text-[#3c4249]">
        <svg viewBox="0 0 32 212" fill="none" stroke="currentColor" strokeWidth="1.2" aria-hidden className="h-[212px] w-8">
          <circle cx="26" cy="5" r="3" /><circle cx="26" cy="206" r="3" /><path d="M24.5 3.5l3 3M27.5 3.5l-3 3M24.5 206h3" />
          <path d="M16 19h10v11a10 10 0 1 1-10-11z" /><circle cx="16" cy="30" r="6" /><path d="M10 25l4 3M22 25l-3 3M16 36v4" />
          <path d="M12 83q-4-5-7-10 3-1 6 3l-2-12q3-2 4 1l2 6V62q2-2 3 0l1 9 2-8q3 0 2 3l-1 7 3-5q2 0 2 2l-4 9q-2 4-4 4z" />
          <path d="M5 91l15 14M19 91L5 105M5 95v-4h4M15 91h4v4M5 101v4h4" /><circle cx="20" cy="104" r="5" fill="#5a6066" /><path d="M24 108l4 4" strokeWidth="2.5" />
          <ellipse cx="16" cy="141" rx="11" ry="4.5" /><path d="M13 149v-18l3-3 3 3v18z" fill="#5a6066" /><path d="M10 143l-3 3 4 2" />
          <path d="M4 169h6v6H4zM12.5 169h6v6h-6zM21 169h6v6h-6zM4 179h17v12H4z" /><path d="M10 182l6 3-6 3z" fill="currentColor" />
          <path d="M14 49h5l-2.5 3zM14 119h5l-2.5 3zM14 157h5l-2.5 3z" fill="currentColor" stroke="none" />
        </svg>
      </div>
    </>
  );
}

const snaps = [["sTrack", "sFrom"], ["sEnd", "sMid", "sInt", "sApp", "sExt"], ["sCen", "sQuad", "sTan"], ["sPerp", "sPar", "sIns", "sNode"], ["sNear", "sNone"], ["sOpts"]];

function Workspace() {
  return (
    <main className="flex min-h-[400px] flex-1 bg-[#686868] pt-[3px]">
      <aside className="mr-1.5 w-6 self-start border border-[#444] bg-[#f0f0f0]">
        <div className="h-2 bg-[#555] bg-[radial-gradient(#222_1px,transparent_1px)] bg-[size:3px_3px]" />
        {snaps.map((group, i) => (
          <div key={i} className={i ? "mx-0.5 mt-[3px] border-t border-[#999] pt-0.5" : ""}>
            {group.map((n) => (
              <button key={n} aria-label={n} className="flex h-[22px] w-full items-center justify-center"><Icon name={n} /></button>
            ))}
          </div>
        ))}
      </aside>
      <div className="flex min-w-0 flex-1 flex-col border-t border-r-2 border-l border-t-[#999] border-r-white border-l-[#999]">
        <div className="relative flex-1 overflow-hidden bg-[#212830]">
          <Drawing />
          <p className="absolute top-[7px] left-1 font-medium text-[#d5d8db]">[−][Góra][Model szkieletowy 2D]</p>
          <NavTools />
        </div>
        <nav className="flex h-[17px] items-center border-b-2 border-white bg-[#efefef] text-[#222]">
          {["M4 3v8M11 3v8L6 7z", "M10 3v8L5 7z", "M5 3v8l5-4z", "M4 3v8l5-4zM11 3v8"].map((d) => (
            <button key={d} aria-label="Przewiń" className="h-full w-[15px] border-r border-[#aaa]">
              <svg viewBox="0 0 15 14" fill="#444" stroke="#444" aria-hidden className="h-3.5 w-[15px]"><path d={d} /></svg>
            </button>
          ))}
          <a href="#model" className="flex h-full w-[53px] items-center justify-center bg-[#212830] text-white [clip-path:polygon(0_0,100%_0,90%_100%,10%_100%)]">Model</a>
          {["Układ1", "Układ2"].map((t) => (
            <a key={t} href="#uklad" className="flex h-full w-[53px] items-center justify-end gap-0.5">
              {t}
              <svg viewBox="0 0 8 14" stroke="#444" aria-hidden className="h-3.5 w-2"><path d="M1 14L7 0" /></svg>
            </a>
          ))}
        </nav>
      </div>
    </main>
  );
}

function CommandLine() {
  return (
    <section className="mt-[5px] flex h-[52px] text-black">
      <div className="flex w-[23px] flex-col items-center justify-between bg-linear-to-b from-[#777] to-[#3c3c3c] pt-1 pb-px text-white">
        <span className="h-1.5 w-4 bg-[radial-gradient(#aaa_1px,transparent_1px)] bg-[size:3px_3px]" />
        <svg viewBox="0 0 10 10" stroke="#fff" strokeWidth="2" aria-hidden className="size-2.5"><path d="M1 1l8 8M9 1L1 9" /></svg>
        <svg viewBox="0 0 16 16" stroke="#fff" strokeWidth="3" fill="none" aria-hidden className="size-3.5"><path d="M6 6l8 8M2 3a4 4 0 1 0 5-1M2 3l3 2" /></svg>
      </div>
      <div className="flex min-w-0 flex-1 flex-col">
        <p className="flex flex-1 items-center border-b border-[#777] bg-[#c8c8c8] pt-2.5 pl-0.5 font-['Liberation_Mono',monospace]">
          Określ drugi punkt lub &lt;użyj pierwszego punktu jako przesunięcia&gt;:
        </p>
        <label className="flex h-[22px] items-center bg-white pl-[5px] text-[#777]">
          <svg viewBox="0 0 15 13" fill="#d5dbe2" stroke="#8a97a5" aria-hidden className="h-[13px] w-[15px]"><path d="M.5 .5h14v12H.5z" /><path d="M3 3l3 3-3 3M8 9.5h4" stroke="#222" fill="none" /></svg>
          <Caret className="mr-1.5 ml-1" />
          <input aria-label="Polecenie" placeholder="Wpisz polecenie" className="flex-1 font-['Liberation_Mono',monospace] italic outline-none placeholder:text-[#9a9a9a]" />
        </label>
      </div>
    </section>
  );
}

const toggles: [string, boolean][] = [
  ["tInfer", false], ["tSnap", false], ["tGrid", true], ["tOrtho", false], ["tPolar", true], ["tOsnap", true], ["t3d", false], ["tAngle", true],
  ["tDucs", true], ["tDyn", true], ["tLwt", false], ["tTpy", true], ["tQp", false], ["tSc", false], ["tPlus", false],
];

function StatusBtn({ icon, on = false }: { icon: string; on?: boolean }) {
  return (
    <button aria-label={icon} className={`flex h-full w-[22px] shrink-0 items-center justify-center border-r border-[#666] ${on ? "bg-linear-to-b from-[#e3f5fc] to-[#a3cfe0]" : "bg-linear-to-b from-[#c3c3c3] to-[#a2a2a2]"}`}>
      <Icon name={icon} />
    </button>
  );
}

function StatusBar() {
  return (
    <footer className="flex h-[23px] border-y border-black bg-linear-to-b from-[#979797] to-[#7b7b7b] text-[#111]">
      <span className="flex w-[178px] items-center border-r border-[#555] pl-3 font-['Liberation_Sans',Arial,sans-serif] text-[11px]">-26.1780, 4.6303 , 0.0000</span>
      {toggles.map(([n, on]) => <StatusBtn key={n} icon={n} on={on} />)}
      <button className="ml-auto flex w-[59px] items-center justify-center border-x border-[#666] bg-linear-to-b from-[#c3c3c3] to-[#a2a2a2] text-[11px]">MOBSZAR</button>
      <StatusBtn icon="model" /><StatusBtn icon="viewports" />
      <button className="ml-3 flex w-[51px] items-center justify-center gap-[3px] border-x border-[#666] bg-linear-to-b from-[#c3c3c3] to-[#a2a2a2]"><Icon name="anno" className="size-3.5" />1:1<Caret big /></button>
      <StatusBtn icon="annoSun" /><StatusBtn icon="annoOff" />
      <span className="w-[6px]" />
      <StatusBtn icon="gear" /><StatusBtn icon="lockOpen" /><StatusBtn icon="hardware" />
      <span className="flex w-[37px] items-center justify-center"><span className="flex h-[19px] w-6 items-center justify-center border border-[#666] bg-[#a5a5a5]"><Icon name="bulb" /></span></span>
      <span className="flex w-2.5 items-center justify-center border-x border-[#666] bg-[#a5a5a5]"><Caret /></span>
      <StatusBtn icon="clean" />
      <span className="mr-0.5 ml-[3px] size-3 self-end bg-[radial-gradient(#ccc_1px,transparent_1px)] bg-[size:4px_4px] [clip-path:polygon(100%_0,100%_100%,0_100%)]" />
    </footer>
  );
}

// 32x32 taskbar artwork
const apps: { name: string; open?: boolean; active?: boolean; art: ReactNode }[] = [
  { name: "Internet Explorer", art: <><path d="M26 22a10.500 10.500 0 1 1 .5-6H9" fill="none" stroke="#1f8fd6" strokeWidth="6" /><path d="M26 22a10.500 10.500 0 1 1 .5-6H9" fill="none" stroke="#5cc8f5" strokeWidth="4" /><path d="M3 29Q0 24 12 12T30 3q1 3-2 7" fill="none" stroke="#f4c63a" strokeWidth="2.5" /></> },
  { name: "Eksplorator", art: <><path d="M2 4h9l2 3h17v21H2z" fill="#e9cf76" /><path d="M4 9h26v19H4z" fill="#f7e8a4" /><path d="M6 3h3v3H6z" fill="#4a9a4a" /><path d="M14 5h4v3h-4z" fill="#c44" /><path d="M7 30v-9q0-3 3-3h12q3 0 3 3v9h-5v-6h-8v6z" fill="#7fc4ea" stroke="#dff2fb" /></> },
  { name: "Firefox", open: true, art: <><circle cx="16" cy="16" r="14" fill="#e8661b" /><circle cx="16" cy="13" r="10" fill="#2f5fa8" /><path d="M2 15Q4 6 9 5l2 5 6 1q-1 4-5 4 2 6 9 4 8-3 5-14 6 6 3 15a14 14 0 0 1-27-5z" fill="#f08a1e" /><path d="M28 7q4 10-3 16 5-9-1-18z" fill="#f9cf4a" /></> },
  { name: "Chrome", art: <><circle cx="16" cy="16" r="14" fill="#e33b2e" /><path d="M16 16L4 9a14 14 0 0 0 10 21z" fill="#3aa757" /><path d="M16 16l-2 14A14 14 0 0 0 28.5 10H16z" fill="#fbc116" /><circle cx="16" cy="16" r="6.5" fill="#fff" /><circle cx="16" cy="16" r="5" fill="#4c8bf5" /></> },
  { name: "Media Player", art: <><path d="M12 4h17v23H12z" fill="#4b9bd0" stroke="#cde6f5" /><path d="M3 6h22v23H3z" fill="#8fc5e6" stroke="#e5f3fb" /><circle cx="14" cy="17" r="8.5" fill="#ef7d21" /><path d="M11 12l8 5-8 5z" fill="#fff" /></> },
  { name: "Czytnik", open: true, art: <><path d="M3 1h26v28l-3 2H3z" fill="#dedede" stroke="#999" /><path d="M7 5h18v19H7z" fill="#4a4d50" /><path d="M8 8h5v16H8z" fill="#1c8fe0" /><path d="M15 10h4v14h-4z" fill="#18578a" /><path d="M20 27h6" stroke="#888" strokeWidth="2" /></> },
  { name: "Skype", open: true, art: <><circle cx="16" cy="16" r="12.5" fill="#19a9ec" /><circle cx="10" cy="9" r="7.5" fill="#19a9ec" /><circle cx="22" cy="23" r="7.5" fill="#19a9ec" /><text x="16" y="24" textAnchor="middle" fontSize="22" fontWeight="700" fill="#fff" fontFamily="Open Sans, sans-serif">S</text></> },
  { name: "V", open: true, art: <><circle cx="16" cy="16" r="15" fill="#f39a1a" /><path d="M5 4l7 25h7l8-25h-5l-6 20L11 3z" fill="#fff" /><circle cx="24" cy="24" r="6" fill="#e9b91c" stroke="#222" /><text x="24" y="27" textAnchor="middle" fontSize="8" fontWeight="700" fill="#111" fontFamily="Open Sans, sans-serif">9+</text></> },
  { name: "Aparat", open: true, art: <><rect x="1" y="1" width="30" height="30" rx="3" fill="#2a2a2c" stroke="#111" /><circle cx="16" cy="16" r="13" fill="#c9c9cc" /><circle cx="16" cy="16" r="10" fill="#2c2b4a" /><circle cx="15" cy="15" r="6" fill="#5c5690" /><circle cx="16" cy="16" r="3" fill="#151428" /><circle cx="12" cy="12" r="2" fill="#c5c0ee" /></> },
  { name: "AutoCAD", open: true, active: true, art: <><rect width="32" height="32" fill="#f27f7f" /><path d="M12 0h20v26z" fill="#f9cccc" /><path d="M16 2L7 22l4-1z" fill="#c9281c" /><path d="M16 2l9 22-4-2z" fill="#6f0d0a" /><path d="M16 2l-5 13-3 8q8-5 16 1l-3-9z" fill="#a81a12" /></> },
];

// 16x16 notification area artwork
const tray: ReactNode[] = [
  <><circle cx="8" cy="8" r="7" fill="#596b78" /><path d="M2 8q6-5 12 0-4 5-9 3 5 1 6-2-4-3-9-1z" fill="#dde6ec" /></>,
  <><circle cx="6" cy="6" r="5.500" fill="#7cc51f" /><circle cx="10" cy="10" r="5.500" fill="#7cc51f" /><path d="M4 8l3 3 5-6" stroke="#fff" strokeWidth="2" /></>,
  <><circle cx="8" cy="8" r="7.5" fill="#f07d19" /><path d="M6 12a4.5 4.5 0 1 1 5-1V7" stroke="#fff" strokeWidth="2" /></>,
  <><path d="M3 4l8-3 4 4-7 3z" fill="#eee" /><path d="M1 9l8-4 5 4-7 5z" fill="#aaa" /><path d="M1 12h4v3H1z" fill="#c0398b" /><path d="M10 11h5v2h-5z" fill="#6fc04a" /></>,
  <text x="8" y="13" textAnchor="middle" fontSize="14" fill="#fff" fontFamily="Open Sans, sans-serif">9</text>,
  <><circle cx="8" cy="8" r="7" fill="#4f9d3c" /><text x="8" y="12" textAnchor="middle" fontSize="11" fontWeight="700" fill="#fff" fontFamily="Open Sans, sans-serif">6</text></>,
  <><path d="M4 1h9v14H4z" fill="#79bfe8" /><path d="M6 3h5v4H6z" fill="#fff" /><path d="M1 11Q8 3 15 5" stroke="#f0a93a" strokeWidth="1.5" /></>,
  <><circle cx="7" cy="8" r="6.5" fill="#f39a1a" /><path d="M4 3l3 8 4-7" stroke="#fff" strokeWidth="2" /><circle cx="12" cy="12" r="3.5" fill="#e9c01c" /></>,
  <><path d="M1 2q7-2 13 0 0 9-6.5 13Q1 11 1 2z" fill="#e5e5e5" /><path d="M7 2v13M1 7h13" stroke="#a33" /><rect x="8" y="7" width="7" height="8" fill="#c8202f" /><path d="M11.5 8.5v3M11.5 13v1" stroke="#fff" strokeWidth="1.5" /></>,
  <><path d="M1 3h8v7H1z" fill="#1c5f9c" /><path d="M8 5l6-2v7L8 9z" fill="#9fb6c9" /><path d="M3 12h8v2H3z" fill="#3c82c0" /></>,
  <><path d="M1 1h14v10H1z" fill="#c9d0ea" stroke="#eee" /><path d="M1 13h6v2H1zM9 13h6v2H9z" fill="#8a93b8" /></>,
  <><path d="M0 0h16v16H0z" fill="#55555a" /><circle cx="8" cy="8" r="6.500" fill="#b9b9bd" /><circle cx="8" cy="8" r="4.500" fill="#2c2b4a" /><circle cx="7" cy="7" r="2" fill="#8c86c0" /></>,
  <><circle cx="7" cy="7" r="6.5" fill="#3b9ad6" /><path d="M2 5q5-5 8 0-2 4-5 3zM6 11l6-3v4z" fill="#5dbb4c" /><path d="M10 10l5 5M15 10l-5 5" stroke="#fff" /></>,
  <path d="M4 4l8 8-4 3V1l4 3-8 8" stroke="#6fa9dc" strokeWidth="1.5" />,
  <path d="M8 1q-7 9-4 12 4 3 8 0 3-3-4-12zM8 6v6" stroke="#2e9fd0" strokeWidth="2" />,
  <path d="M2 14v-2M5 14v-4M8 14V8M11 14V5M14 14V2" stroke="#eee" strokeWidth="2" />,
  <><path d="M3 4h8v10H3z" stroke="#eee" strokeWidth="1.5" /><path d="M9 6h5v5H9zM10 6V3M13 6V3" fill="#eee" stroke="#eee" /></>,
  <><path d="M1 6h3l4-4v12l-4-4H1z" fill="#eee" /><path d="M10 5q2 3 0 6M12.5 3q3 5 0 10" stroke="#eee" /></>,
];

function Taskbar() {
  return (
    <nav className="relative mt-0.5 flex h-[39px] items-center overflow-hidden border-t border-[#666] bg-linear-to-r from-[#050505] via-[#161616] to-[#0a0a0a] text-white">
      <button aria-label="Start" className="ml-2 flex size-[38px] shrink-0 items-center justify-center rounded-full border border-[#8aa5b5] bg-radial from-[#7fc8ee] via-[#2c7099] to-[#1b3648]">
        <svg viewBox="0 0 24 24" aria-hidden className="size-6"><path d="M3 6q4-3 8-1l-1 6q-4-2-8 0z" fill="#f0642c" /><path d="M12 5q5 2 9-1l-1 7q-4 2-9 0z" fill="#8dc63f" /><path d="M2 13q4-2 8 0l-1 7q-4-2-8 0z" fill="#3fa9f5" /><path d="M11 13q5 2 9 0l-1 7q-4 2-9 0z" fill="#fbd03a" /></svg>
      </button>
      <div className="ml-3.5 flex gap-1">
        {apps.map((a) => (
          <button
            key={a.name}
            aria-label={a.name}
            className={`flex h-[38px] w-[58px] shrink-0 items-center justify-center rounded-sm border ${a.active ? "border-white bg-linear-to-br from-[#f5f5f5] via-[#9a9a9a] to-[#777]" : a.open ? "border-[#8a8a8a] bg-linear-to-br from-[#b5b5b5] via-[#3a3a3a] to-[#2a2a2a]" : "border-transparent"}`}
          >
            <svg viewBox="0 0 32 32" aria-hidden className="size-[31px]">{a.art}</svg>
          </button>
        ))}
      </div>
      <span className="ml-auto">PL</span>
      <svg viewBox="0 0 16 16" fill="none" stroke="#bbb" aria-hidden className="mr-3.5 ml-2 size-4"><path d="M1 7h14v7H1zM5 7q0-3 4-3t4-3" /><path d="M3 9.5h10M3 12h10" strokeDasharray="1 1" /></svg>
      <div className="flex gap-2">
        {tray.map((art, i) => <svg key={i} viewBox="0 0 16 16" fill="none" aria-hidden className="size-4">{art}</svg>)}
      </div>
      <div className="z-10 flex w-[88px] flex-col items-center text-center leading-[17px]"><span>17:56</span><span>2014-02-05</span></div>
      <span className="h-full w-3 border border-[#777] bg-linear-to-br from-[#555] to-[#111]" />
      <svg viewBox="0 0 204 38" aria-hidden className="pointer-events-none absolute right-[18px] h-[38px] w-[204px]" fontSize="40" fontWeight="700" fontStyle="italic" fontFamily="DejaVu Sans, sans-serif" textAnchor="middle">
        <path d="M132 18l14-5-3 6z" fill="#a3232c" />
        <text x="102" y="31" fill="#101010" fillOpacity=".5" stroke="#6c6c6c" strokeWidth="1">bikepics</text>
      </svg>
    </nav>
  );
}

export default function App() {
  return (
    <div className="flex min-h-screen flex-col bg-black pt-[3px] font-['Open_Sans','Noto_Sans',sans-serif] text-[12px] leading-4">
      <div className="relative mx-[3px] flex flex-1 flex-col rounded-lg border border-[#777] bg-[#080808] px-[5px] pb-[5px]">
        <div className="relative -mt-px flex flex-1 flex-col border-x border-[#999]">
          <TitleBar />
          <AppButton />
          <nav className="flex h-[21px] items-center gap-[22px] border-t border-[#ccc] bg-linear-to-b from-[#a0a0a0] to-[#5c5c5c] pl-[55px] text-white">
            {menus.map((m) => <button key={m}>{m}</button>)}
            <svg viewBox="0 0 44 12" fill="none" stroke="#222" aria-hidden className="mr-1 ml-auto h-3 w-11"><path d="M1 9h9" strokeWidth="3" /><path d="M17 5h8v6h-8zM20 4V1h8v6h-3" strokeWidth="1.5" /><path d="M35 2l7 8M42 2l-7 8" strokeWidth="2.5" /></svg>
          </nav>
          <nav className="flex h-5 items-end gap-[17px] bg-[#3f3f3f] pl-[4px] text-white">
            <button className="-mr-2.5 h-[17px] rounded-t-sm bg-linear-to-b from-[#d8d8d8] to-white px-2 leading-4 text-[#333]">Narzędzia główne</button>
            {tabs.map((t) => <button key={t} className="h-[18px] leading-4">{t}</button>)}
            <button aria-label="Zwiń wstążkę" className="flex h-[18px] items-center gap-1.5 pl-3">
              <span className="flex h-2 w-3 items-center justify-center rounded-xs bg-[#eee] text-black"><Caret className="rotate-180" /></span><Caret />
            </button>
          </nav>
          <Ribbon />
          <div className="flex h-[29px] items-end border-t border-[#ddd] border-b border-b-[#777] bg-linear-to-b from-[#8e8e8e] to-[#a5a5a5] pl-[15px]">
            <div className="flex h-[22px] w-[135px] items-center justify-between bg-linear-to-b from-[#e5e5e5] to-[#b0b0b0] pr-[17px] pb-0.5 pl-4 text-[#222] [clip-path:polygon(8%_0,91%_0,100%_100%,0_100%)]">
              Rysunek1*
              <button aria-label="Zamknij rysunek"><svg viewBox="0 0 8 8" stroke="#777" strokeWidth="2" aria-hidden className="size-2"><path d="M1 1l6 6M7 1L1 7" /></svg></button>
            </div>
            <button aria-label="Nowy rysunek" className="mb-1 ml-px">
              <svg viewBox="0 0 22 16" fill="#7d7d7d" stroke="#444" aria-hidden className="h-4 w-[22px]"><path d="M1 1h14q4 0 6 14H6Q2 14 1 1z" /><path d="M11 5v7M7.5 8.5h7" stroke="#bbb" strokeWidth="2.5" /></svg>
            </button>
          </div>
          <Workspace />
          <div className="flex flex-col bg-[#686868]">
            <CommandLine />
            <StatusBar />
          </div>
        </div>
      </div>
      <Taskbar />
    </div>
  );
}
